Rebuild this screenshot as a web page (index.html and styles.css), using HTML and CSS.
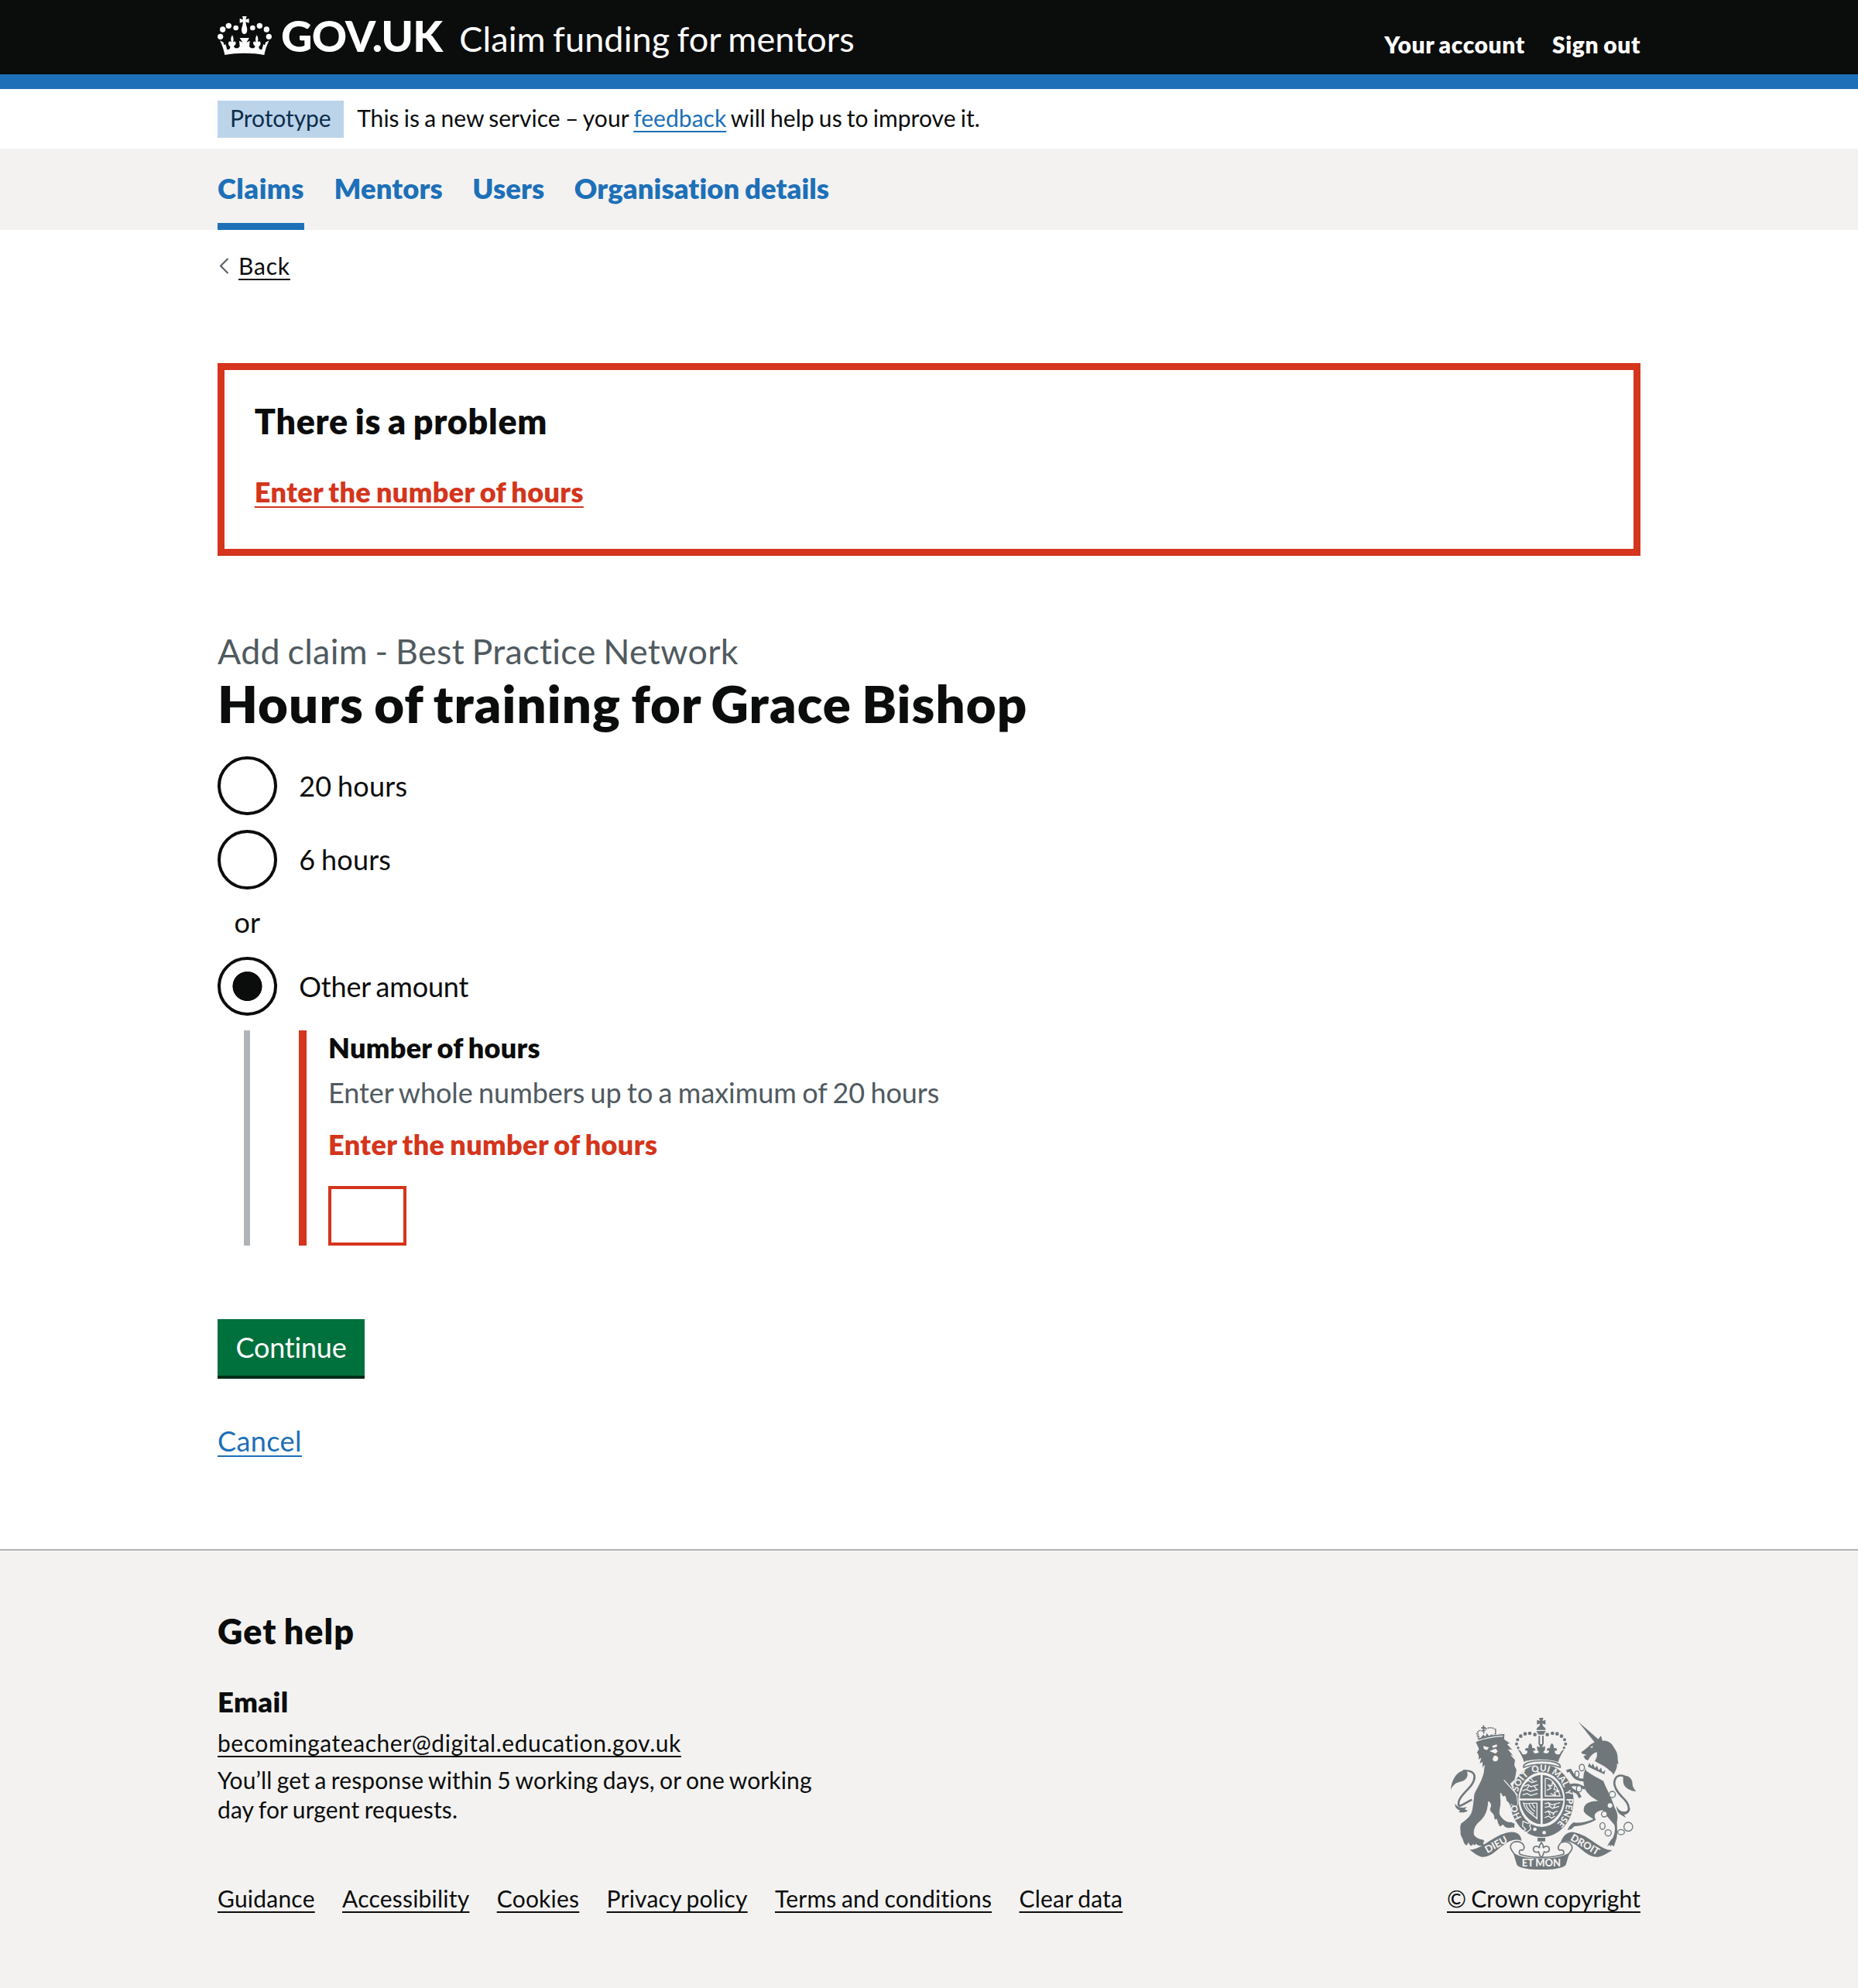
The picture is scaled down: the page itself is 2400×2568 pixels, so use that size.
FILE: index.html
```html
<!DOCTYPE html>
<html lang="en">
<head>
<meta charset="utf-8">
<title>Hours of training for Grace Bishop - Claim funding for mentors</title>
<link rel="stylesheet" href="styles.css">
</head>
<body>
<header class="header">
  <div class="container header-inner">
    <svg class="crown" viewBox="8 9 210 150" aria-hidden="true">
      <g fill="#fff">
        <circle cx="19" cy="88" r="11"/><circle cx="28" cy="60" r="11"/><circle cx="51" cy="46" r="11"/><circle cx="79" cy="54" r="10"/>
        <circle cx="207" cy="88" r="11"/><circle cx="198" cy="60" r="11"/><circle cx="171" cy="46" r="11"/><circle cx="144" cy="54" r="10"/>
        <path d="M104 9h17l-4 13 13-4v17l-13-4 3 16c5 12 4 30-8 31-12-1-13-19-8-31l3-16-13 4V18l13 4z"/>
        <path id="half" d="M113 152C84 152 60 154 36 159 32 138 26 122 17 103l14 7c2 10 4 14 8 6l6 22c9 1 14-6 11-13-6-3-8-11-4-17 5-3 8-1 10 2-3-10-4-18 3-28 6 10 6 18 3 28 3-3 7-5 10-1 3 6-1 13-7 16 3 10 17 11 23 1l-2-22 13 6-11-17h20z"/>
        <use href="#half" transform="matrix(-1 0 0 1 225 0)"/>
      </g>
    </svg>
    <a class="logo">GOV.UK</a>
    <a class="service">Claim funding for mentors</a>
    <nav class="account">
      <a>Your account</a>
      <a>Sign out</a>
    </nav>
  </div>
</header>
<div class="container phase">
  <strong class="tag">Prototype</strong>
  <span>This is a new service – your <a class="link blue">feedback</a> will help us to improve it.</span>
</div>
<nav class="primary">
  <div class="container primary-list">
    <a class="current">Claims</a>
    <a>Mentors</a>
    <a>Users</a>
    <a>Organisation details</a>
  </div>
</nav>
<main class="container">
  <div class="back">
    <svg class="chevron" viewBox="0 0 13 21"><path d="M11.500 1 2 10.500 11.500 20" fill="none" stroke="#505a5f" stroke-width="2"/></svg>
    <a class="link">Back</a>
  </div>
  <section class="summary">
    <h2>There is a problem</h2>
    <a class="link error-link">Enter the number of hours</a>
  </section>
  <span class="caption">Add claim - Best Practice Network</span>
  <h1>Hours of training for Grace Bishop</h1>
  <div class="radio"><span class="dot"></span><label>20 hours</label></div>
  <div class="radio"><span class="dot"></span><label>6 hours</label></div>
  <div class="or">or</div>
  <div class="radio other"><span class="dot checked"></span><label>Other amount</label></div>
  <div class="conditional">
    <div class="group">
      <label class="group-label">Number of hours</label>
      <div class="hint">Enter whole numbers up to a maximum of 20 hours</div>
      <p class="error">Enter the number of hours</p>
      <input class="input" type="text">
    </div>
  </div>
  <button class="button">Continue</button>
  <div class="cancel"><a class="link blue">Cancel</a></div>
</main>
<footer class="footer">
  <div class="container footer-inner">
    <div class="footer-main">
      <h2>Get help</h2>
      <h3>Email</h3>
      <p class="email"><a class="link">becomingateacher@digital.education.gov.uk</a></p>
      <p class="response">You’ll get a response within 5 working days, or one working<br>day for urgent requests.</p>
      <div class="footer-links">
        <a class="link">Guidance</a>
        <a class="link">Accessibility</a>
        <a class="link">Cookies</a>
        <a class="link">Privacy policy</a>
        <a class="link">Terms and conditions</a>
        <a class="link">Clear data</a>
      </div>
    </div>
    <div class="copyright">
      <svg class="crest" viewBox="72 57 718 588" aria-hidden="true">
        <g fill="#6f777b">
          <!-- crown -->
          <path d="M414 57h17l-4 12 12-4v18l-12-4 3 12h-15l3-12-12 4V65l12 4z"/>
          <path d="M404 104a18 16 0 0 1 36 0zM404 108h36l-8 14h-20zM412 127h6v32h-6zM426 127h6v32h-6z"/>
          <circle cx="398" cy="122" r="7"/><circle cx="378" cy="117" r="7"/><circle cx="360" cy="119" r="7"/><circle cx="343" cy="128" r="7"/><circle cx="331" cy="142" r="6"/><circle cx="327" cy="158" r="6"/><circle cx="333" cy="173" r="5"/>
          <circle cx="446" cy="122" r="7"/><circle cx="466" cy="117" r="7"/><circle cx="484" cy="119" r="7"/><circle cx="501" cy="128" r="7"/><circle cx="513" cy="142" r="6"/><circle cx="517" cy="158" r="6"/><circle cx="511" cy="173" r="5"/>
          <path d="M356 228C350 210 342 194 332 180c10 2 13 8 17 17 12 5 22-3 20-12l-9-2c-1-8 6-11 13-8-2-9 1-14 7-20 6 6 9 11 7 20 7-3 14 0 13 8l-9 2c2 12 14 12 23 5l-7-8-1-15 12 4-5-12h18l-5 12 12-4-1 15-7 8c9 7 21 7 23-5l-9-2c-1-8 6-11 13-8-2-9 1-14 7-20 6 6 9 11 7 20 7-3 14 0 13 8l-9 2c-2 9 8 17 20 12 4-9 7-15 17-17-10 14-18 30-24 48-44-13-94-13-138 0z"/>
          <!-- garter and arms -->
          <ellipse cx="425" cy="378" rx="123" ry="141"/>
          <path d="M354 249c-10-34 152-34 142 0-42-16-100-16-142 0z" fill="#f3f2f1" stroke="#6f777b" stroke-width="5"/>
          <ellipse cx="424" cy="374" rx="90" ry="106" fill="#f3f2f1"/>
          <path d="M420 278v92h-80c2-46 36-88 80-92zM428 278c44 4 78 46 80 92h-80zM420 377v92c-42-4-74-42-80-92zM428 377h80c-4 50-40 88-80 92z"/>
          <g fill="none" stroke="#f3f2f1" stroke-width="4">
            <path d="M360 308l12-8 14 8 20-6M356 322l16-6 10 8 28-8M350 340l14-6 16 8 30-8M350 356l18-6 14 8 26-8M382 292l12 14M376 318l-8 14M396 322l8 12"/>
            <path d="M438 292c20-4 42 18 58 68h-58zM444 338l16-8-10-12 14 2 2-14 10 14-4 14 18 6-16 6 4 12-20-8"/>
            <path d="M354 388c8 6 34-4 52 0v60c-20-20-46-28-52-60zM364 394c4 16 16 26 30 36M376 392c4 14 12 20 22 28M388 391l10 16"/>
            <path d="M436 390l14-4 14 8 32-8M436 404l18-4 12 8 26-8M436 424l16-6 14 8 20-8M436 444l16-6 10 8 14-8M450 386l8 14M478 390l-8 16M450 420l8 14M474 422l-6 12"/>
          </g>
          <path id="garter" d="M424 491A95 112 0 0 1 424 264A95 112 0 0 1 424 491" fill="none"/>
          <g class="motto">
            <text><textPath href="#garter" startOffset="18.500%">HO</textPath></text>
            <text><textPath href="#garter" startOffset="36%">SOIT</textPath></text>
            <text><textPath href="#garter" startOffset="49.500%">QUI</textPath></text>
            <text><textPath href="#garter" startOffset="61.500%">MAL</textPath></text>
            <text><textPath href="#garter" startOffset="70.500%">Y</textPath></text>
            <text><textPath href="#garter" startOffset="82%">PENSE</textPath></text>
          </g>
          <g fill="#f3f2f1"><circle cx="398" cy="489" r="7"/><circle cx="434" cy="502" r="7"/></g>
          <path d="M352 458l18 8 16-4-8 12 4 14-14 12-16-2 10-10-12-12z" stroke="#f3f2f1" stroke-width="4"/>
          <!-- lion -->
          <g transform="translate(60 42)">
            <path stroke="#f3f2f1" stroke-width="3" d="M108 110l12 26-8 14c8 8 8 16 6 30l10-8-6 23 12-7-2 24 10-12c-4 22-2 26-6 36-6 26-26 54-34 74-4 35-6 60-12 75-10 20-28 30-40 40-6 15 0 30-2 40 4 13 10 19 12 30 4 10 10 17 16 15l4-10c6 14 14 14 18 6l6 4 6-5c12 11 26 9 32 1l-4-6c8-4 4-12-2-14-12-2-24-6-32-16-4-14 0-30 12-45 24-20 40-40 42-85 6 2 10 10 8 20-6 10-2 18 6 24 8 8 6 16 10 28l8-4c2 12 6 24 14 30l10-8c8 14 24 16 38 10 6 10 10-8 8-16-10-4-14-8-24-6-16-4-30-18-34-32-2-14 8-36 3-61 1-7-1-13 0-19l9 16 8-4 6 20 8 6 4 12 6-6c12 8 22 10 26 0l-4-32-24-48 16-14c6-18 6-28 8-40l-8-16 2-22-16-18 12 6-22-28 18 4-22-24 12-4-24-16 2-22c-28 2-78 8-98 16z"/>
            <path d="M112 74l10 34c18-10 40-14 62-14l2-36" fill="none" stroke="#6f777b" stroke-width="5" stroke-dasharray="5 4"/>
            <path d="M116 72c6-14 20-8 24 0 6-20 26-24 46-12l-2 28c-20 0-42 4-60 14z" fill="none" stroke="#6f777b" stroke-width="5" stroke-dasharray="6 3"/>
            <path d="M136 44h6v24h-6zM130 51h18v6h-18zM128 92l10-12 8 8 6-14 8 12 12-8 4 12c-18 0-34 2-48 10z"/>
            <path d="M110 106c32-12 64-18 104-20" fill="none" stroke="#f3f2f1" stroke-width="4"/>
            <path fill="#f3f2f1" d="M138 124l22 6-8 10-12-4zM172 124l18-6 2 8-16 6zM162 144l24-10 8 10-8 10zM178 164c6-6 16-2 18 8 0 14-18 16-22 4z"/>
            <path d="M218 256l54 60" stroke="#f3f2f1" stroke-width="4"/>
            <path d="M94 332C58 350 34 374 44 336c10-30 60-56 60-92 0-20-20-26-44-24" fill="none" stroke="#6f777b" stroke-width="8"/>
            <path d="M12 294c2-32 18-68 50-76 18 2 18 20 10 32-12 14-28 12-42 20-10 8-14 14-18 24zM28 348c10 16 30 18 46 12l-8 10 12 4c-10 10-26 8-36 6l6-6c-12-4-20-12-20-26z"/>
          </g>
          <!-- unicorn -->
          <g transform="translate(420 42)">
            <path d="M146 30l64 80 14-12z"/>
            <path d="M158 148c22-13 32-30 47-36l17-12 12-16 6 20c22-4 40 14 44 26 12 15 16 30 15 48l3 16-6-2c2 18-6 30-14 44-4-14-14-14-22-24-14-12-34-20-50-30 8-12 10-20 8-34-14 4-26 16-34 32l-10-4-8-12 12-6-18-4z"/>
            <path fill="#f3f2f1" d="M192 128l12-4-4 8zM186 184l88 42-12 24-82-40z"/>
            <path d="M189 190l8 12 6-10 8 18 8-10 6 18 10-10 4 18 12-8-4 16-64-30z"/>
            <path d="M176 210c-14 22-12 58-4 80 10 20 28 35 53 48-35-3-63 12-57 40 8 14 28 22 37 30-25 10-55 17-77 12-13 8-20 20-24 30l16-4 10-10c30-4 60-11 84-26-8-15-8-30 26-38 18 28 35 43 46 58 6 25-2 40-6 50-10 10-18 25-22 34l10-8 2 8 6-6 8 6 8-24c8-20 4-50 4-72 4-18 4-33-8-53-4-15-10-25-16-45-10-20-24-46-28-60-24-12-46-24-68-40z"/>
            <path d="M175 256c-30 2-44-6-60-38l-14 4M172 288c-24-12-38-18-60-10l8 14 24 14 10 18" fill="none" stroke="#6f777b" stroke-width="11" stroke-linejoin="round"/>
            <path d="M326 242c-36-14-48 20-34 48 16 34 50 44 50 78-4 20-22 22-40 10" fill="none" stroke="#6f777b" stroke-width="8"/>
            <path d="M320 240c20-4 36 10 36 30 0 12 6 20 14 30-22-2-50-14-50-40zM294 356c8 16 18 24 36 22 8-4 12-10 18-12-4 16-12 22-24 24l6 12-20-12c-10-6-16-20-16-34z"/>
            <g fill="#f3f2f1" stroke="#6f777b" stroke-width="4"><ellipse cx="160" cy="208" rx="10" ry="13"/><ellipse cx="141" cy="233" rx="8" ry="12"/><ellipse cx="149" cy="290" rx="10" ry="12"/><circle cx="278" cy="312" r="12"/><circle cx="269" cy="355" r="11"/><circle cx="247" cy="388" r="11"/><ellipse cx="240" cy="434" rx="10" ry="13"/><circle cx="262" cy="461" r="12"/><ellipse cx="312" cy="458" rx="13" ry="10"/><circle cx="340" cy="437" r="17"/></g>
          </g>
          <!-- ribbon -->
          <path d="M145 568c50 0 90-58 155-68 26-4 46 10 46 34-30-14-60 6-88 30-22 20-44 34-66 32-18-4-34-18-47-28zM698 570c-50 0-84-58-150-70-26-2-42 16-50 40 32-14 56 6 84 30 22 18 40 28 62 26 20-4 38-16 54-26z"/>
          <path d="M344 540c-24-10-44 4-40 22 4 16 18 18 22 40 30 20 30 26 98 26s70-6 96-24c4-22 18-24 22-40 2-18-18-32-42-24-10 10-18 22-6 30 14-4 20 6 14 16-30 10-62 12-86 12s-54-2-82-12c-6-10-2-20 10-16 12-8 6-22-6-30z" fill="#f3f2f1" stroke="#6f777b" stroke-width="5"/>
          <path d="M314 580c30 20 70 22 110 22s76-4 108-22l-14 46c-12 26-178 26-190 0z"/>
          <path d="M408 522h30v14h-30z"/>
          <path d="M423 540c6 8 9 14 7 22 6-10 24-10 24 4 0 12-12 14-20 10l-6 16-5 6-5-6-6-16c-8 4-20 2-20-10 0-14 18-14 24-4-2-8 1-14 7-22z" fill="#f3f2f1" stroke="#6f777b" stroke-width="5"/>
          <g class="ribbon">
            <text transform="translate(254 560) rotate(-29)">DIEU</text>
            <text x="423" y="633">ET MON</text>
            <text transform="translate(586 560) rotate(30)">DROIT</text>
          </g>
        </g>
      </svg>
      <a class="link">© Crown copyright</a>
    </div>
  </div>
</footer>
</body>
</html>
```
FILE: styles.css
```css
* { box-sizing: border-box; word-spacing: -0.05em; }
body { margin: 0; background: #fff; color: #0b0c0c; font-family: Lato, "Open Sans", sans-serif; font-size: 30px; line-height: 38.3px; font-variant-ligatures: none; }
h1, h2, h3, p { margin: 0; }
h1, h2, h3 { font-weight: 800; }
.container { width: 1838px; margin: 0 auto; }
.link { text-decoration: underline; text-decoration-thickness: 2px; text-underline-offset: 5px; }
.blue { color: #1d70b8; }

.header { height: 115px; background: #0b0c0c; border-bottom: 19px solid #1d70b8; color: #fff; }
.header-inner { display: flex; align-items: baseline; padding-top: 16px; }
.crown { width: 70px; height: 50px; align-self: flex-start; margin-top: 5px; }
.logo { margin-left: 12px; font-size: 56px; line-height: 60px; font-weight: 900; letter-spacing: -0.8px; }
.service { margin-left: 22px; font-size: 45px; line-height: 58px; letter-spacing: 0.1px; }
.account { display: flex; gap: 35px; align-self: flex-start; margin: 21.500px 0 0 auto; font-weight: 800; letter-spacing: 0.6px; }

.phase { display: flex; align-items: baseline; gap: 17.500px; height: 76.5px; padding-top: 15px; letter-spacing: 0.03px; }
.tag { height: 48px; padding: 0 16px 4px; background: #bbd4ea; color: #0c2d4a; font-weight: 400; line-height: 44px; letter-spacing: -0.05px; }

.primary { height: 105.5px; background: #f3f2f1; color: #1d70b8; font-size: 36.4px; font-weight: 800; letter-spacing: 0.1px; }
.primary-list { display: flex; gap: 38.500px; }
.primary-list a { height: 105.5px; padding-top: 7.500px; line-height: 89px; }
.primary-list .current { border-bottom: 9.6px solid #1d70b8; letter-spacing: 0.5px; }

.back { display: flex; align-items: center; gap: 12px; margin-top: 22.4px; line-height: 48px; letter-spacing: 0.8px; }
.chevron { width: 13px; height: 21px; margin-left: 2px; }

.summary { height: 249.5px; margin-top: 101.6px; padding: 37.500px 38.8px; border: 9.6px solid #d4351c; }
.summary h2 { margin-bottom: 38px; font-size: 44.8px; line-height: 58px; letter-spacing: 0.75px; }
.error-link { color: #d4351c; font-size: 36px; line-height: 48px; font-weight: 800; letter-spacing: 0.37px; }
.caption { display: block; margin-top: 93.2px; color: #505a5f; font-size: 44.8px; line-height: 58px; letter-spacing: 0.32px; }
h1 { margin: 2px 0 33px; font-size: 67px; line-height: 72px; letter-spacing: 1.08px; }

.radio { display: flex; gap: 28.700px; height: 76.6px; margin-bottom: 19.2px; font-size: 36px; line-height: 76.6px; letter-spacing: 0.2px; }
.other { letter-spacing: -0.2px; }
.dot { width: 76.6px; height: 76.6px; border: 4px solid #0b0c0c; border-radius: 50%; }
.checked { background: radial-gradient(circle, #0b0c0c 18.7px, transparent 19.4px); }
.or { width: 76.6px; margin: -1px 0 20.3px; font-size: 36px; line-height: 48px; text-align: center; }
.conditional { margin-left: 34px; padding-left: 62.500px; border-left: 8px solid #b1b4b6; font-size: 36px; line-height: 48px; }
.group { padding-left: 28.500px; border-left: 10px solid #d4351c; }
.group-label { display: block; line-height: 44px; font-weight: 800; letter-spacing: 0.3px; }
.hint { margin-top: 12px; color: #505a5f; letter-spacing: -0.05px; }
.error { margin: 19px 0 30px; color: #d4351c; font-weight: 800; letter-spacing: 0.38px; }
.input { display: block; width: 101px; height: 77px; border: 4px solid #d4351c; border-radius: 0; background: #fff; }
.button { display: block; width: 190px; height: 77px; margin-top: 95px; padding: 0; border: 0; border-bottom: 4px solid #002d18; background: #00703c; color: #fff; font: 36px/73px Lato, "Open Sans", sans-serif; font-variant-ligatures: none; letter-spacing: -0.2px; }
.cancel { margin-top: 56px; font-size: 36px; line-height: 48px; letter-spacing: 0.43px; }

.footer { height: 567px; margin-top: 116px; border-top: 2px solid #b1b4b6; background: #f3f2f1; }
.footer-inner { display: flex; justify-content: space-between; align-items: flex-end; padding-top: 74.4px; }
.footer h2 { font-size: 44.8px; line-height: 58px; letter-spacing: 1.1px; }
.footer h3 { margin: 38.6px 0 10px; font-size: 36.4px; line-height: 48px; letter-spacing: 0.4px; }
.email { letter-spacing: 0.55px; }
.response { margin-top: 9px; letter-spacing: 0.13px; }
.footer-links { display: flex; gap: 35.300px; margin-top: 77px; letter-spacing: 0.22px; }
.copyright { display: flex; flex-direction: column; align-items: center; width: 250px; white-space: nowrap; letter-spacing: 0.08px; }
.crest { width: 239.3px; height: 196px; margin-bottom: 18px; }
.motto, .ribbon { fill: #f3f2f1; font-weight: 900; text-anchor: middle; font-size: 35px; letter-spacing: 0; }
.ribbon { font-size: 39px; }
```
